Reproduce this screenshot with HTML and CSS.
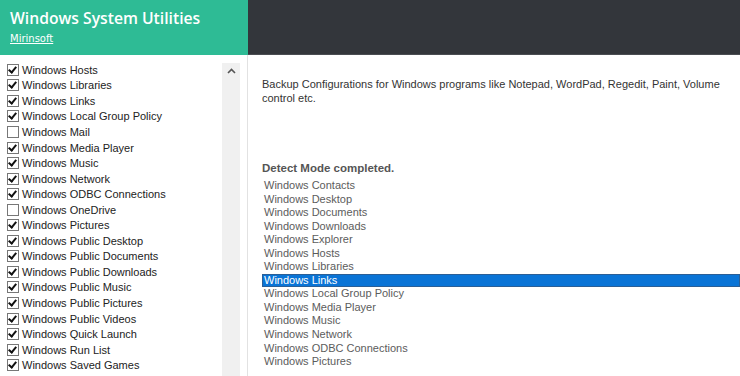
FILE: index.html
```html
<!DOCTYPE html>
<html lang="en">
<head>
    <meta charset="UTF-8">
    <title>Windows System Utilities</title>
    <link rel="stylesheet" href="styles.css">
</head>
<body>
    <header class="top">
        <div class="brand">
            <h1>Windows System Utilities</h1>
            <a href="#">Mirinsoft</a>
        </div>
        <div class="bar"></div>
    </header>
    <div class="main">
        <aside class="side">
            <ul class="checks">
                <li><span class="box on"></span>Windows Hosts</li>
                <li><span class="box on"></span>Windows Libraries</li>
                <li><span class="box on"></span>Windows Links</li>
                <li><span class="box on"></span>Windows Local Group Policy</li>
                <li><span class="box"></span>Windows Mail</li>
                <li><span class="box on"></span>Windows Media Player</li>
                <li><span class="box on"></span>Windows Music</li>
                <li><span class="box on"></span>Windows Network</li>
                <li><span class="box on"></span>Windows ODBC Connections</li>
                <li><span class="box"></span>Windows OneDrive</li>
                <li><span class="box on"></span>Windows Pictures</li>
                <li><span class="box on"></span>Windows Public Desktop</li>
                <li><span class="box on"></span>Windows Public Documents</li>
                <li><span class="box on"></span>Windows Public Downloads</li>
                <li><span class="box on"></span>Windows Public Music</li>
                <li><span class="box on"></span>Windows Public Pictures</li>
                <li><span class="box on"></span>Windows Public Videos</li>
                <li><span class="box on"></span>Windows Quick Launch</li>
                <li><span class="box on"></span>Windows Run List</li>
                <li><span class="box on"></span>Windows Saved Games</li>
            </ul>
            <div class="scroll">
                <svg class="up" width="9" height="6" viewBox="0 0 9 6"><path d="M1 5 L4.5 1.5 L8 5" fill="none" stroke="#555" stroke-width="1.6"/></svg>
            </div>
        </aside>
        <section class="content">
            <p class="desc">Backup Configurations for Windows programs like Notepad, WordPad, Regedit, Paint, Volume control etc.</p>
            <h2>Detect Mode completed.</h2>
            <ul class="results">
                <li>Windows Contacts</li>
                <li>Windows Desktop</li>
                <li>Windows Documents</li>
                <li>Windows Downloads</li>
                <li>Windows Explorer</li>
                <li>Windows Hosts</li>
                <li>Windows Libraries</li>
                <li class="selected">Windows Links</li>
                <li>Windows Local Group Policy</li>
                <li>Windows Media Player</li>
                <li>Windows Music</li>
                <li>Windows Network</li>
                <li>Windows ODBC Connections</li>
                <li>Windows Pictures</li>
            </ul>
        </section>
    </div>
</body>
</html>
```

FILE: styles.css
```css
html, body {
    margin: 0;
    height: 100%;
    overflow: hidden;
    background: #fff;
    font-family: "Liberation Sans", Arial, sans-serif;
}

/* header */
.top {
    display: flex;
    height: 55px;
}
.brand {
    width: 248px;
    background-color: #2ebb95;
    padding: 8px 10px 0;
    box-sizing: border-box;
}
.brand h1 {
    margin: 0;
    color: #fff;
    font-family: "Open Sans", sans-serif;
    font-weight: 600;
    font-size: 15.7px;
    line-height: 20px;
}
.brand a {
    display: inline-block;
    margin-top: 3px;
    color: #fff;
    font-family: "DejaVu Sans", sans-serif;
    font-size: 10px;
}
.bar {
    flex: 1;
    background-color: #33363b;
    border-bottom: 1px solid #4a4d52;
}

/* body */
.main {
    display: flex;
    height: 321px;
}
.side {
    width: 248px;
    display: flex;
    border-right: 1px solid #e2e2e2;
    box-sizing: border-box;
}
.checks {
    list-style: none;
    margin: 0;
    padding: 7px 0 0 7px;
    flex: 1;
    font-size: 11px;
    color: #222;
}
.checks li {
    display: flex;
    align-items: center;
    height: 15.55px;
}
.box {
    width: 10px;
    height: 10px;
    border: 1px solid #777;
    margin-right: 3px;
    position: relative;
}
.box.on::after {
    content: "";
    position: absolute;
    left: 2px;
    top: 0px;
    width: 3px;
    height: 6px;
    border: solid #111;
    border-width: 0 2px 2px 0;
    transform: rotate(40deg);
}
.scroll {
    width: 18px;
    margin: 8px 7px 0 0;
    background-color: #f0f0f0;
    display: flex;
    justify-content: center;
    padding-top: 5px;
}
.up {
    display: block;
}

.content {
    flex: 1;
    padding: 22px 0 0 14px;
    color: #333;
    font-size: 11px;
}
.desc {
    margin: 0;
    line-height: 14px;
    padding-right: 10px;
}
.content h2 {
    margin: 56px 0 4px;
    font-size: 11.5px;
    font-weight: bold;
    color: #555;
    line-height: 14px;
}
.results {
    list-style: none;
    margin: 0;
    padding: 0;
    color: #5c5c5c;
}
.results li {
    height: 13.55px;
    line-height: 13.55px;
    padding-left: 2px;
}
.results li.selected {
    background-color: #0a74d6;
    color: #fff;
    box-shadow: inset 0 0 0 1px #2b5f96;
}
```
